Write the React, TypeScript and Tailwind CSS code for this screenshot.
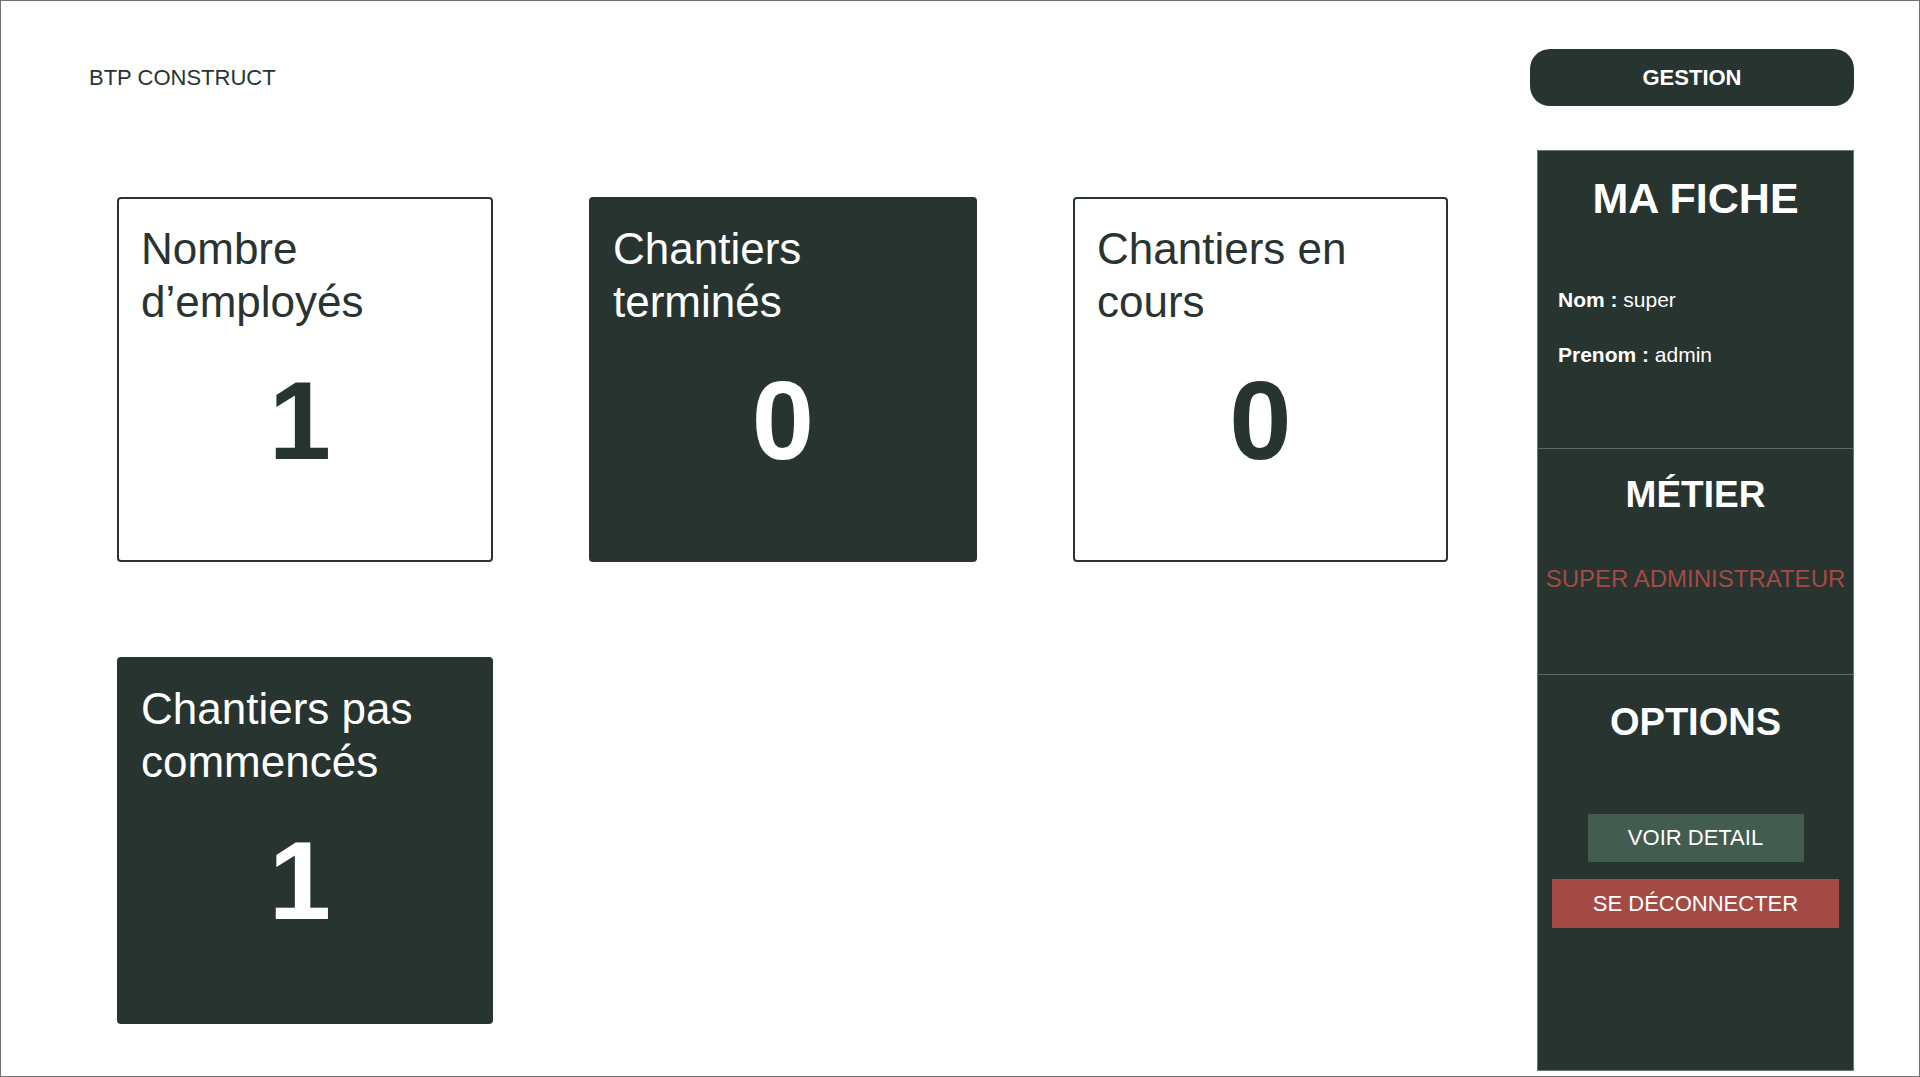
const StatCard = ({ title, value, dark, height }: { title: string; value: number; dark?: boolean; height: string }) => {
    return (
        <div
            className={`${height} flex flex-col rounded-[4px] border-2 border-[#283430] px-[22px] pt-[23px] ${
                dark ? 'bg-[#283430] text-white' : 'bg-white text-[#283430]'
            }`}
        >
            <div className="text-[44px] leading-[53px]">{title}</div>
            <div className={`mt-[37px] text-center text-[112px] font-bold leading-none ${value === 1 ? 'pr-[10px]' : ''}`}>
                {value}
            </div>
        </div>
    )
}

const App = () => {
    return (
        <div
            className="flex h-[1077px] w-[1920px] border border-[#707070] bg-white text-[#283430]"
            style={{ fontFamily: '"Liberation Sans", Arial, Helvetica, sans-serif' }}
        >
            {/* colonne principale */}
            <div className="flex flex-1 flex-col">
                <div className="mt-[48px] flex h-[57px] items-center pl-[88px]">
                    <span className="text-[22px] leading-none">BTP CONSTRUCT</span>
                </div>
                <div className="mt-[91px] grid grid-cols-[376px_388px_375px] gap-x-[96px] gap-y-[95px] pl-[116px]">
                    <StatCard title="Nombre d’employés" value={1} height="h-[365px]" />
                    <StatCard title="Chantiers terminés" value={0} dark height="h-[365px]" />
                    <StatCard title="Chantiers en cours" value={0} height="h-[365px]" />
                    <StatCard title="Chantiers pas commencés" value={1} dark height="h-[367px]" />
                </div>
            </div>

            {/* colonne droite */}
            <div className="mr-[65px] flex w-[324px] flex-col">
                <button className="mt-[48px] h-[57px] w-full rounded-[20px] bg-[#283430] text-[22px] font-bold leading-none text-white">
                    GESTION
                </button>
                <div className="mt-[44px] ml-[7px] flex h-[921px] w-[317px] flex-col border border-[#6f7773] bg-[#283430] text-white">
                    <div className="h-[298px] border-b border-[#5f6864] pt-[26px]">
                        <h2 className="text-center text-[43px] font-bold leading-none">MA FICHE</h2>
                        <div className="mt-[69px] flex flex-col gap-[34px] pl-[20px] text-[21px] leading-none">
                            <p>
                                <span className="font-bold">Nom :</span> super
                            </p>
                            <p>
                                <span className="font-bold">Prenom :</span> admin
                            </p>
                        </div>
                    </div>
                    <div className="h-[226px] border-b border-[#5f6864] pt-[27px] text-center">
                        <h2 className="text-[37px] font-bold leading-none">MÉTIER</h2>
                        <p className="mt-[54px] text-[24px] leading-none text-[#a44a45]">SUPER ADMINISTRATEUR</p>
                    </div>
                    <div className="flex flex-1 flex-col items-center pt-[28px]">
                        <h2 className="text-[38px] font-bold leading-none">OPTIONS</h2>
                        <button className="mt-[73px] h-[48px] w-[216px] bg-[#435c50] text-[22px] leading-none text-white">
                            VOIR DETAIL
                        </button>
                        <button className="mt-[17px] h-[49px] w-[287px] bg-[#a44a45] text-[22px] leading-none text-white">
                            SE DÉCONNECTER
                        </button>
                    </div>
                </div>
            </div>
        </div>
    )
}

export default App
